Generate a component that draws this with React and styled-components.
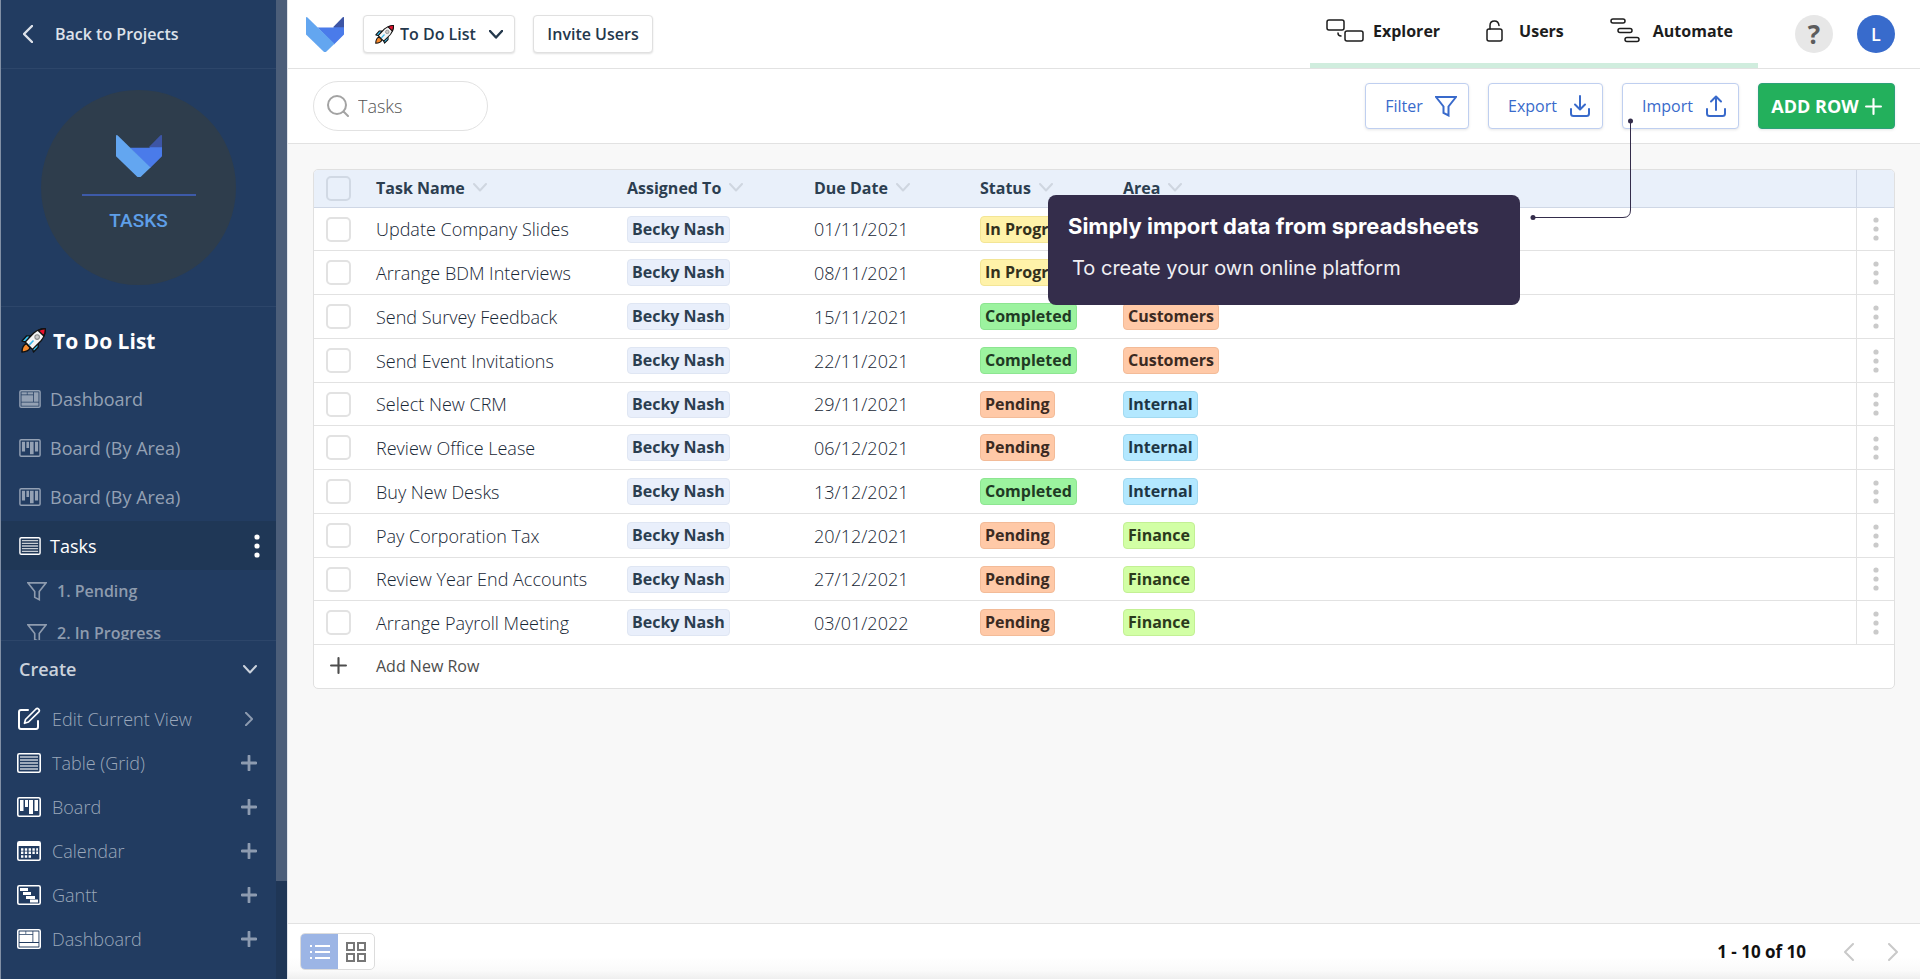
import React from "react";
import styled, { createGlobalStyle, css } from "styled-components";

const Global = createGlobalStyle`
  *, *::before, *::after { box-sizing: border-box; }
  html, body, #root { height: 100%; margin: 0; }
  body {
    font-family: "Open Sans", "Noto Sans", sans-serif;
    font-size: 18px;
    color: #2c3e50;
    background: #f8f8f8;
    overflow: hidden;
  }
  button, input, select { font: inherit; color: inherit; margin: 0; }
  button { background: none; border: 0; padding: 0; cursor: pointer; }
  a { color: inherit; text-decoration: none; }
  svg { display: block; flex: none; }
`;

/* ---------- drawings ---------- */

const Fox = ({ width }) => (
  <svg width={width} viewBox="0 0 38 35" aria-hidden="true">
    <path d="M38 0.6v16.9L28 27.5 11.500 10.500H27.500L37 0.600z" fill="#4a7bea" />
    <path d="M27 10.200 36.800 0.300Q38-0.400 38 1v9.200z" fill="#3d55a5" />
    <path d="M0 1Q0-0.500 1.200 0.300L28.500 26.800 20.500 34.400Q19 35.400 17.500 34.400L0 17.500z" fill="#63a6f0" />
  </svg>
);

const Rocket = ({ size }) => (
  <svg width={size} height={size} viewBox="0 0 24 24" aria-hidden="true">
    <g stroke="#111" strokeWidth="1.300" strokeLinejoin="round">
      <path d="M9 7.500 5.500 7.500 1 12.500 5.500 13.500z" fill="#38c3f5" />
      <path d="M16.500 15 16.500 18.500 12 23 10.500 18.500z" fill="#38c3f5" />
      <path d="M5 15 8.800 19Q7 23 0.900 23.100 1 17 5 15z" fill="#f7892b" />
      <path d="M23.300 0.700Q24 6.500 19.500 12L11 20.500 4 13.500 12 5Q17.500 0.300 23.300 0.700z" fill="#f4f4f4" />
      <path d="M23.300 0.700Q23.600 4.500 21.700 7.500L16.500 2.500Q19.500 0.500 23.300 0.700z" fill="#e8112d" />
    </g>
    <circle cx="15.500" cy="8.700" r="2.200" fill="#ccc" stroke="#8a8a8a" />
    <path d="M8 16.200 12 12" stroke="#38b6ea" strokeWidth="1.500" />
  </svg>
);

const Stroke = ({ w = 20, h = w, box = "0 0 20 20", sw = 2, d, children }) => (
  <svg width={w} height={h} viewBox={box} fill="none" stroke="currentColor" strokeWidth={sw}
    strokeLinecap="round" strokeLinejoin="round" aria-hidden="true">
    {d && <path d={d} />}
    {children}
  </svg>
);

const ChevronDown = ({ w = 14, sw = 2 }) => (
  <Stroke w={w} h={Math.round(w * 0.64)} box="0 0 14 9" sw={sw} d="M1 1 7 7.500 13 1" />
);
const ChevronLeft = ({ sw = 2 }) => <Stroke w={10} h={18} box="0 0 10 18" sw={sw} d="M9 1 1 9 9 17" />;
const ChevronRight = ({ w = 10, sw = 2 }) => (
  <Stroke w={w} h={Math.round(w * 1.8)} box="0 0 10 18" sw={sw} d="M1 1 9 9 1 17" />
);
const Plus = ({ w = 16, sw = 2 }) => <Stroke w={w} box="0 0 16 16" sw={sw} d="M8 1V15M1 8H15" />;
const Funnel = ({ w = 20, sw = 2 }) => (
  <Stroke w={w} h={w} box="0 0 22 22" sw={sw}>
    <path d="M1 2H21L13.500 11.500V20.500L8.500 18V11.500Z" strokeLinejoin="miter" />
  </Stroke>
);
const Transfer = ({ up }) => (
  <Stroke w={22} h={22} box="0 0 22 22">
    <path d="M2 14V18.500Q2 21 4.500 21H17.500Q20 21 20 18.500V14" />
    <path d={up ? "M11 15V2M6 6.500 11 1.500 16 6.500" : "M11 1V14M6 9.500 11 14.500 16 9.500"} />
  </Stroke>
);
const Search = () => (
  <Stroke w={22} box="0 0 22 22">
    <circle cx="10" cy="10" r="9" />
    <path d="M16.500 16.500 21 21" />
  </Stroke>
);
const Pencil = () => (
  <Stroke w={24} box="0 0 24 24">
    <path d="M11 3H4Q2 3 2 5V20Q2 22 4 22H19Q21 22 21 20V14" />
    <path d="M8.500 12.500 19 2Q20.300 0.900 21.600 2.100 23 3.500 21.800 4.800L11.500 15 7.500 16.300Z" strokeWidth="1.700" />
  </Stroke>
);
const Dots = ({ h = 24, r = 2.6 }) => (
  <svg width="6" height={h} viewBox="0 0 6 24" fill="currentColor" aria-hidden="true">
    <circle cx="3" cy="3" r={r} />
    <circle cx="3" cy="12" r={r} />
    <circle cx="3" cy="21" r={r} />
  </svg>
);

const viewArt = {
  dashboard: (
    <path d="M2.500 2.500H8.500V5H2.500zM9.200 2.500H15.500V5H9.200zM16.300 2.500H21.500V13H16.300zM2.500 5.800H15.500V13H2.500zM2.500 14H21.500V17.500H2.500z" fill="currentColor" />
  ),
  board: <path d="M3 3H6.500V14H3zM8 3H11V10H8zM12 3H16V17H12zM17.500 3H21V14H17.500z" fill="currentColor" />,
  grid: <path d="M3 4H21M3 7H21M3 10H21M3 13H21M3 16H21" stroke="currentColor" strokeWidth="1.400" opacity="0.75" />,
  calendar: (
    <>
      <path d="M1 1H23V5H1z" fill="currentColor" />
      <path d="M4 8.500H21M4 11.700H21M4 15.500H14" stroke="currentColor" strokeWidth="2.400" strokeDasharray="2.400 1.400" />
    </>
  ),
  gantt: <path d="M3 3H11V6H3zM6 7H14V10H6zM9 11H18V14H9zM13 14.500H21V17.500H13z" fill="currentColor" />,
};

const ViewIcon = ({ kind, width = 24 }) => (
  <svg width={width} height={Math.round((width * 20) / 24)} viewBox="0 0 24 20" aria-hidden="true">
    <rect x="0.800" y="0.800" width="22.400" height="18.400" rx="1.500" fill="none" stroke="currentColor" strokeWidth="1.600" />
    {viewArt[kind]}
  </svg>
);

const ExplorerIcon = () => (
  <Stroke w={38} h={23} box="0 0 38 23" sw={1.5}>
    <rect x="1" y="1" width="17" height="10" rx="2" />
    <rect x="19" y="12" width="18" height="10" rx="2" />
    <path d="M12 14Q12 17 15 17" />
  </Stroke>
);
const LockIcon = () => (
  <Stroke w={18} h={22} box="0 0 18 22" sw={1.5}>
    <rect x="1" y="9" width="15" height="12" rx="2" />
    <path d="M4 9V5.500Q4 1 8.500 1 12.500 1 13 5.500" />
  </Stroke>
);
const AutomateIcon = () => (
  <Stroke w={30} h={25} box="0 0 30 25" sw={1.5}>
    <rect x="1" y="1" width="14" height="4" rx="2" />
    <rect x="8" y="10.500" width="14" height="4" rx="2" />
    <rect x="15" y="19.500" width="14" height="4" rx="2" />
  </Stroke>
);
const ListIcon = () => (
  <svg width="22" height="16" viewBox="0 0 22 16" stroke="currentColor" strokeWidth="2" aria-hidden="true">
    <path d="M1 2H3M6 2H21M1 8H3M6 8H21M1 14H3M6 14H21" />
  </svg>
);
const TilesIcon = () => (
  <svg width="20" height="20" viewBox="0 0 20 20" fill="none" stroke="currentColor" strokeWidth="2" aria-hidden="true">
    <path d="M1 1H8V8H1zM12 1H19V8H12zM1 12H8V19H1zM12 12H19V19H12z" />
  </svg>
);

/* ---------- shell ---------- */

const Shell = styled.div`
  display: flex;
  height: 100vh;
`;

const Sidebar = styled.aside`
  display: flex;
  flex: none;
  width: 288px;
  background: #223c61;
  border-left: 1px solid #8290a5;
  border-right: 1px solid #dfe3e9;
`;

const SideColumn = styled.div`
  flex: 1;
  min-width: 0;
  display: flex;
  flex-direction: column;
`;

const ScrollTrack = styled.div`
  width: 11px;
  background: #1f3656;
`;

const ScrollThumb = styled.div`
  height: 90%;
  background: #4c5e79;
`;

const BackLink = styled.a`
  display: flex;
  align-items: center;
  gap: 22px;
  height: 69px;
  padding-left: 22px;
  color: #dde2ea;
  font-size: 16px;
  font-weight: 600;
  border-bottom: 1px solid #2d466a;
`;

const Brand = styled.div`
  display: flex;
  justify-content: center;
  align-items: center;
  height: 238px;
  border-bottom: 1px solid #2d466a;
`;

const BrandDisc = styled.div`
  display: flex;
  flex-direction: column;
  align-items: center;
  width: 195px;
  height: 195px;
  padding-top: 45px;
  border-radius: 50%;
  background: #2e3d4c;
  color: #5e9fe8;
  font: 500 19px/24px Roboto, sans-serif;

  hr {
    width: 114px;
    height: 2px;
    margin: 17px 0 13px;
    border: 0;
    background: #3d5aa8;
  }
`;

const ViewList = styled.nav`
  flex: 1;
  min-height: 0;
  overflow: hidden;
`;

const ProjectTitle = styled.h1`
  display: flex;
  align-items: center;
  gap: 7px;
  height: 67px;
  margin: 0;
  padding-left: 20px;
  color: #fff;
  font-size: 21px;
  font-weight: 700;
`;

const ViewLink = styled.a`
  display: flex;
  align-items: center;
  gap: 9px;
  height: 49px;
  padding: 0 16px 0 18px;
  color: #94a1b4;
  font-size: 18px;
  font-weight: 500;

  ${(p) => p.$active && css`
    color: #fff;
    background: #1f3756;
  `}
  ${(p) => p.$nested && css`
    height: 42px;
    padding-left: 26px;
    color: #8e9bae;
    gap: 10px;
    font-size: 16px;
    font-weight: 600;
  `}
`;

const Push = styled.span`
  flex: 1;
`;

const CreatePanel = styled.section`
  flex: none;
  padding-bottom: 18px;
  border-top: 1px solid #2d466a;
`;

const CreateHeader = styled.button`
  display: flex;
  justify-content: space-between;
  align-items: center;
  width: 100%;
  height: 56px;
  padding: 0 19px 0 18px;
  color: #cbd2dc;
  font-weight: 600;
`;

const CreateItem = styled.button`
  display: flex;
  align-items: center;
  gap: 11px;
  width: 100%;
  height: 44px;
  padding: 0 19px 0 16px;
  color: #9ba8bb;
  font-weight: 300;

  svg:first-child { color: #fff; }
`;

const Trailing = styled.span`
  display: flex;
  justify-content: center;
  width: 16px;

  svg:first-child { color: #8d9bb0; }
`;

const Main = styled.main`
  position: relative;
  flex: 1;
  min-width: 0;
  display: flex;
  flex-direction: column;
`;

/* ---------- header ---------- */

const TopBar = styled.header`
  display: flex;
  align-items: center;
  height: 69px;
  padding: 0 25px 0 18px;
  background: #fff;
  border-bottom: 1px solid #e2e2e2;
`;

const boxed = css`
  height: 38px;
  border: 1px solid #e0e0e0;
  border-radius: 4px;
  background: #fff;
  color: #24384c;
  font-size: 16px;
  font-weight: 600;
  box-shadow: 0 1px 2px #0000001f;
`;

const ProjectPicker = styled.label`
  ${boxed}
  display: flex;
  align-items: center;
  width: 152px;
  margin-left: 19px;
  padding: 0 11px;

  select {
    flex: 1;
    min-width: 0;
    padding: 0 0 0 6px;
    border: 0;
    appearance: none;
    background: none;
    outline: none;
  }
`;

const InviteButton = styled.button`
  ${boxed}
  width: 120px;
  margin-left: 18px;
`;

const TopNav = styled.nav`
  display: flex;
  align-items: center;
  align-self: stretch;
  gap: 46px;
  padding: 0 25px 2px 16px;
  border-bottom: 5px solid #d0edde;
`;

const TopLink = styled.a`
  display: flex;
  align-items: center;
  gap: ${(p) => p.$gap || 15}px;
  color: #1d1d1d;
  font-size: 16px;
  font-weight: 700;
`;

const RoundButton = styled.button`
  width: 38px;
  height: 38px;
  margin-left: ${(p) => (p.$user ? 24 : 37)}px;
  border-radius: 50%;
  background: ${(p) => (p.$user ? "#386bcc" : "#e7e7e7")};
  color: ${(p) => (p.$user ? "#fff" : "#5c5c5c")};
  font-size: ${(p) => (p.$user ? 18 : 26)}px;
  line-height: 38px;
  font-weight: ${(p) => (p.$user ? 600 : 700)};
`;

const Toolbar = styled.div`
  display: flex;
  align-items: center;
  gap: 19px;
  height: 75px;
  padding: 0 25px;
  background: #fff;
  border-bottom: 1px solid #e2e2e2;
`;

const SearchBox = styled.label`
  display: flex;
  align-items: center;
  gap: 9px;
  width: 175px;
  height: 50px;
  padding: 0 13px;
  color: #a3a3a3;
  border: 1px solid #e2e2e2;
  border-radius: 25px;

  input {
    flex: 1;
    min-width: 0;
    padding: 0;
    border: 0;
    outline: none;
    background: none;
    font-weight: 300;
  }
  input::placeholder { color: #555; opacity: 1; }
`;

const ToolButton = styled.button`
  display: flex;
  justify-content: center;
  align-items: center;
  gap: 12px;
  width: ${(p) => p.$width}px;
  height: 46px;
  padding-left: 8px;
  border: 1px solid #bfcff0;
  border-radius: 4px;
  background: #fff;
  color: #396acb;
  font-size: 16px;
  font-weight: 500;
  box-shadow: 0 1px 3px #0000001a;
`;

const AddButton = styled(ToolButton)`
  gap: 6px;
  padding: 0;
  border-color: #2ba277;
  background: #23b05c;
  color: #fff;
  font-size: 18px;
  font-weight: 700;
`;

/* ---------- table ---------- */

const Content = styled.div`
  flex: 1;
  min-height: 0;
  padding: 25px 25px 0;
  overflow: hidden;
`;

const Sheet = styled.div`
  overflow: hidden;
  border: 1px solid #e0e0e0;
  border-radius: 5px;
  background: #fff;
`;

const Table = styled.table`
  width: 100%;
  table-layout: fixed;
  border-collapse: separate;
  border-spacing: 0;

  th, td {
    padding: 0;
    text-align: left;
    white-space: nowrap;
    border-bottom: 1px solid #e2e2e2;
  }
  th {
    height: 38px;
    background: #e9f0fa;
    border-color: #cfd7e5;
    font-size: 16px;
    font-weight: 700;
  }
  td {
    height: 44px;
    color: #172635;
    font-weight: 300;
  }
  tbody tr:nth-child(4n + 1) td { height: 43px; }
  th:last-child, td:last-child { border-left: 1px solid #e2e2e2; }
  th:last-child { border-left-color: #cfd7e5; }
`;

const Col = styled.col`
  width: ${(p) => (p.$width ? `${p.$width}px` : "auto")};
`;

const SortButton = styled.button`
  display: flex;
  align-items: center;
  gap: 8px;
  padding-bottom: 2px;

  svg { color: #cfd6e0; }
`;

const Check = styled.input.attrs({ type: "checkbox" })`
  display: block;
  width: 25px;
  height: 25px;
  margin: 0 0 0 12px;
  appearance: none;
  border: 2px solid ${(p) => (p.$head ? "#d1d9e4" : "#e2e2e2")};
  border-radius: 5px;
`;

const tones = {
  person: ["#e9effb", "#dfe6f3", "#2b3e50"],
  "In Progress": ["#fff2a9", "#f3e595", "#33301c"],
  Completed: ["#9cf39f", "#8de591", "#1f3a24"],
  Pending: ["#ffc9a7", "#f3bb98", "#3b2a22"],
  Customers: ["#ffc9a7", "#f3bb98", "#3b2a22"],
  Internal: ["#b3e8ff", "#a2daf1", "#1e3644"],
  Finance: ["#d2ffa5", "#c3f094", "#2b3a1c"],
};

const Tag = styled.span`
  display: inline-block;
  height: 27px;
  padding: 0 4px;
  border: 1px solid ${(p) => tones[p.$tone][1]};
  border-radius: 4px;
  background: ${(p) => tones[p.$tone][0]};
  color: ${(p) => tones[p.$tone][2]};
  font-size: 16px;
  font-weight: 700;
  line-height: 25px;
  vertical-align: middle;
`;

const RowMenu = styled.button`
  display: flex;
  justify-content: center;
  width: 100%;
  color: #cacaca;
`;

const AddRow = styled.button`
  display: flex;
  align-items: center;
  gap: 29px;
  width: 100%;
  height: 43px;
  padding: 0 0 2px 16px;
  color: #4d4d4d;
  font-size: 16px;
  font-weight: 500;
`;

/* ---------- footer ---------- */

const Footer = styled.footer`
  display: flex;
  align-items: center;
  height: 56px;
  padding: 0 22px 0 12px;
  border-top: 1px solid #e2e2e2;
  background: linear-gradient(#fff 60%, #fafafa 85%, #efefef);
`;

const Toggle = styled.div`
  display: flex;
  height: 37px;
  border: 1px solid #dcdcdc;
  border-radius: 5px;
  overflow: hidden;
  background: #fff;
`;

const ToggleButton = styled.button`
  display: flex;
  justify-content: center;
  align-items: center;
  width: ${(p) => (p.$on ? 37 : 36)}px;
  color: ${(p) => (p.$on ? "#fff" : "#777")};
  background: ${(p) => (p.$on ? "#9cb5e5" : "none")};
`;

const Pager = styled.div`
  display: flex;
  align-items: center;
  gap: 34px;
  color: #c9c9c9;
`;

const Count = styled.span`
  margin-right: 4px;
  color: #111;
  font-size: 17px;
  font-weight: 700;
`;

/* ---------- callout ---------- */

const Callout = styled.div`
  position: absolute;
  top: 195px;
  right: 400px;
  width: 472px;
  height: 110px;
  padding: 15px 20px;
  border-radius: 8px;
  background: #342d4b;
  color: #fff;
  font-family: Inter, sans-serif;

  h2 { margin: 0; font-size: 22px; line-height: 32px; font-weight: 700; }
  p { margin: 10px 0 0 4px; font-size: 20px; line-height: 32px; font-weight: 400; color: #f0eff3; }
`;

const Connector = styled.svg`
  position: absolute;
  top: 118px;
  right: 286px;
  pointer-events: none;
`;

const views = [
  ["dashboard", "Dashboard"],
  ["board", "Board (By Area)"],
  ["board", "Board (By Area)"],
];
const creatable = [
  ["grid", "Table (Grid)"],
  ["board", "Board"],
  ["calendar", "Calendar"],
  ["gantt", "Gantt"],
  ["dashboard", "Dashboard"],
];
const columns = ["Task Name", "Assigned To", "Due Date", "Status", "Area"];
const tasks = [
  ["Update Company Slides", "01/11/2021", "In Progress", "Customers"],
  ["Arrange BDM Interviews", "08/11/2021", "In Progress", "Customers"],
  ["Send Survey Feedback", "15/11/2021", "Completed", "Customers"],
  ["Send Event Invitations", "22/11/2021", "Completed", "Customers"],
  ["Select New CRM", "29/11/2021", "Pending", "Internal"],
  ["Review Office Lease", "06/12/2021", "Pending", "Internal"],
  ["Buy New Desks", "13/12/2021", "Completed", "Internal"],
  ["Pay Corporation Tax", "20/12/2021", "Pending", "Finance"],
  ["Review Year End Accounts", "27/12/2021", "Pending", "Finance"],
  ["Arrange Payroll Meeting", "03/01/2022", "Pending", "Finance"],
];

export default function App() {
  return (
    <Shell>
      <Global />
      <Sidebar>
        <SideColumn>
          <BackLink href="#projects">
            <ChevronLeft sw={2.4} />
            Back to Projects
          </BackLink>
          <Brand>
            <BrandDisc>
              <Fox width={46} />
              <hr />
              TASKS
            </BrandDisc>
          </Brand>
          <ViewList aria-label="Views">
            <ProjectTitle>
              <Rocket size={25} />
              To Do List
            </ProjectTitle>
            {views.map(([kind, label], i) => (
              <ViewLink key={i} href="#view">
                <ViewIcon kind={kind} width={22} />
                {label}
              </ViewLink>
            ))}
            <ViewLink href="#tasks" $active aria-current="page">
              <ViewIcon kind="grid" width={22} />
              Tasks
              <Push />
              <Dots />
            </ViewLink>
            {["1. Pending", "2. In Progress"].map((label) => (
              <ViewLink key={label} href="#filter" $nested>
                <Funnel w={20} sw={1.8} />
                {label}
              </ViewLink>
            ))}
          </ViewList>
          <CreatePanel>
            <CreateHeader aria-expanded="true">
              Create
              <ChevronDown w={14} />
            </CreateHeader>
            <CreateItem>
              <Pencil />
              Edit Current View
              <Push />
              <Trailing><ChevronRight w={8} sw={2.4} /></Trailing>
            </CreateItem>
            {creatable.map(([kind, label]) => (
              <CreateItem key={label}>
                <ViewIcon kind={kind} />
                {label}
                <Push />
                <Trailing><Plus w={16} sw={2.8} /></Trailing>
              </CreateItem>
            ))}
          </CreatePanel>
        </SideColumn>
        <ScrollTrack>
          <ScrollThumb />
        </ScrollTrack>
      </Sidebar>

      <Main>
        <TopBar>
          <Fox width={38} />
          <ProjectPicker>
            <Rocket size={19} />
            <select aria-label="Project" defaultValue="todo">
              <option value="todo">To Do List</option>
            </select>
            <ChevronDown w={14} sw={2.4} />
          </ProjectPicker>
          <InviteButton>Invite Users</InviteButton>
          <Push />
          <TopNav aria-label="Workspace">
            <TopLink href="#explorer" $gap={9}><ExplorerIcon />Explorer</TopLink>
            <TopLink href="#users"><LockIcon />Users</TopLink>
            <TopLink href="#automate" $gap={13}><AutomateIcon />Automate</TopLink>
          </TopNav>
          <RoundButton aria-label="Help">?</RoundButton>
          <RoundButton $user aria-label="Account">L</RoundButton>
        </TopBar>

        <Toolbar>
          <SearchBox>
            <Search />
            <input type="search" placeholder="Tasks" aria-label="Search tasks" />
          </SearchBox>
          <Push />
          <ToolButton $width={104}>Filter<Funnel w={22} /></ToolButton>
          <ToolButton $width={115}>Export<Transfer /></ToolButton>
          <ToolButton $width={117}>Import<Transfer up /></ToolButton>
          <AddButton $width={137}>ADD ROW<Plus w={17} /></AddButton>
        </Toolbar>

        <Content>
          <Sheet>
            <Table>
              <colgroup>
                <Col $width={62} />
                <Col $width={251} />
                <Col $width={187} />
                <Col $width={166} />
                <Col $width={143} />
                <Col />
                <Col $width={38} />
              </colgroup>
              <thead>
                <tr>
                  <th><Check $head aria-label="Select all rows" /></th>
                  {columns.map((name) => (
                    <th key={name}>
                      <SortButton>{name}<ChevronDown w={14} /></SortButton>
                    </th>
                  ))}
                  <th aria-label="Row menu" />
                </tr>
              </thead>
              <tbody>
                {tasks.map(([name, due, status, area]) => (
                  <tr key={name}>
                    <td><Check aria-label={`Select ${name}`} /></td>
                    <td>{name}</td>
                    <td><Tag $tone="person">Becky Nash</Tag></td>
                    <td>{due}</td>
                    <td><Tag $tone={status}>{status}</Tag></td>
                    <td><Tag $tone={area}>{area}</Tag></td>
                    <td><RowMenu aria-label={`Options for ${name}`}><Dots /></RowMenu></td>
                  </tr>
                ))}
              </tbody>
            </Table>
            <AddRow><Plus w={17} />Add New Row</AddRow>
          </Sheet>
        </Content>

        <Footer>
          <Toggle>
            <ToggleButton $on aria-label="List view"><ListIcon /></ToggleButton>
            <ToggleButton aria-label="Tile view"><TilesIcon /></ToggleButton>
          </Toggle>
          <Push />
          <Pager>
            <Count>1 - 10 of 10</Count>
            <button aria-label="Previous page"><ChevronLeft /></button>
            <button aria-label="Next page"><ChevronRight /></button>
          </Pager>
        </Footer>

        <Connector width="104" height="104" viewBox="0 0 104 104" fill="none">
          <path d="M100.500 3V92Q100.500 99.500 93 99.500H3" stroke="#342d4b" />
          <circle cx="100.500" cy="3" r="2.500" fill="#342d4b" />
          <circle cx="3" cy="99.500" r="2.500" fill="#342d4b" />
        </Connector>
        <Callout role="tooltip">
          <h2>Simply import data from spreadsheets</h2>
          <p>To create your own online platform</p>
        </Callout>
      </Main>
    </Shell>
  );
}
